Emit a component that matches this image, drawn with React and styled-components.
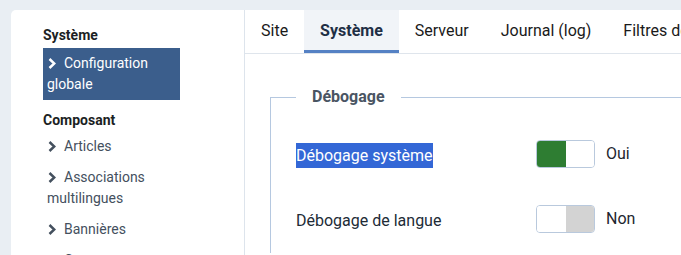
import React from "react";
import styled, { createGlobalStyle, css } from "styled-components";

const GlobalStyle = createGlobalStyle`
  html, body {
    margin: 0;
    padding: 0;
    background: #e9eef3;
    overflow: hidden;
  }
  body {
    font-family: Roboto, "Liberation Sans", Arial, sans-serif;
  }
`;

// Layout
const Page = styled.div`
  display: flex;
  width: 980px;
  padding: 10px 0 0 11px;
`;

const Sidebar = styled.nav`
  width: 233px;
  min-height: 260px;
  padding: 15px 0 0 32px;
  box-sizing: border-box;
  background: #fff;
  border-radius: 5px 0 0 0;
`;

const Heading = styled.div`
  font-size: 14px;
  font-weight: 700;
  line-height: 21px;
  color: #1c1f24;
  margin: ${(p) => (p.first ? "0 0 2px" : "10px 0 0")};
`;

const Menu = styled.ul`
  list-style: none;
  margin: 0;
  padding: 0;
  width: 137px;
`;

const Item = styled.li`
  padding: 5px 4px;
  font-size: 14px;
  line-height: 21px;
  color: #44505e;
  ${(p) =>
    p.active &&
    css`
      background: #3b5e8c;
      color: #fff;
    `}
`;

const Chevron = styled.svg`
  display: inline-block;
  width: 8px;
  height: 11px;
  margin: 0 8px 0 1px;
  vertical-align: -1px;
`;

const Main = styled.main`
  flex: 1;
  background: #fff;
  border-left: 1px solid #dde4ec;
  min-height: 260px;
`;

const TabBar = styled.div`
  display: flex;
  border-bottom: 1px solid #dfe5ec;
`;

const Tab = styled.div`
  height: 43px;
  line-height: 42px;
  padding: 0 16px;
  font-size: 16px;
  color: ${(p) => (p.active ? "#1f2f45" : "#1a1a1a")};
  font-weight: ${(p) => (p.active ? 700 : 400)};
  background: ${(p) => (p.active ? "#f1f4f8" : "transparent")};
  box-shadow: ${(p) => (p.active ? "inset 0 -3px 0 #5581c4" : "none")};
  white-space: nowrap;
`;

const Body = styled.div`
  padding: 30px 0 0 25px;
`;

const Fieldset = styled.fieldset`
  margin: 0;
  padding: 0 25px 20px 25px;
  border: 1px solid #b5c8e0;
  border-right: none;
  border-bottom: none;
  min-width: 0;
`;

const Legend = styled.legend`
  padding: 0 16px;
  font-size: 16px;
  font-weight: 700;
  line-height: 26px;
  color: #4a5563;
`;

const Row = styled.div`
  display: flex;
  align-items: flex-start;
  margin-top: ${(p) => (p.first ? "30px" : "37px")};
`;

const Label = styled.div`
  width: 240px;
  margin-top: 3px;
  font-size: 16px;
  line-height: 25px;
  color: #212b36;
`;

const Selected = styled.span`
  display: inline-block;
  background: #3367d6;
  color: #fff;
`;

const Switch = styled.div`
  display: flex;
  width: 59px;
  height: 28px;
  box-sizing: border-box;
  border: 1px solid #b9c9dd;
  border-radius: 4px;
  overflow: hidden;
`;

const Half = styled.span`
  flex: 1;
  background: ${(p) => p.fill || "#fff"};
`;

const SwitchText = styled.span`
  margin-left: 11px;
  font-size: 16px;
  line-height: 28px;
  color: #1e2630;
`;

const ChevronIcon = () => (
  <Chevron viewBox="0 0 8 11">
    <polyline
      points="1.5,1 6.3,5.5 1.5,10"
      fill="none"
      stroke="currentColor"
      strokeWidth="2.5"
    />
  </Chevron>
);

const components = ["Articles", "Associations multilingues", "Bannières", "Contacts"];
const tabs = ["Site", "Système", "Serveur", "Journal (log)", "Filtres des textes", "Permissions"];

export default function App() {
  return (
    <>
      <GlobalStyle />
      <Page>
        <Sidebar>
          <Heading first>Système</Heading>
          <Menu>
            <Item active>
              <ChevronIcon />
              Configuration globale
            </Item>
          </Menu>
          <Heading>Composant</Heading>
          <Menu>
            {components.map((c) => (
              <Item key={c}>
                <ChevronIcon />
                {c}
              </Item>
            ))}
          </Menu>
        </Sidebar>
        <Main>
          <TabBar>
            {tabs.map((t) => (
              <Tab key={t} active={t === "Système"}>
                {t}
              </Tab>
            ))}
          </TabBar>
          <Body>
            <Fieldset>
              <Legend>Débogage</Legend>
              <Row first>
                <Label>
                  <Selected>Débogage système</Selected>
                </Label>
                <Switch>
                  <Half fill="#2e7d32" />
                  <Half />
                </Switch>
                <SwitchText>Oui</SwitchText>
              </Row>
              <Row>
                <Label>Débogage de langue</Label>
                <Switch>
                  <Half />
                  <Half fill="#d3d3d3" />
                </Switch>
                <SwitchText>Non</SwitchText>
              </Row>
            </Fieldset>
          </Body>
        </Main>
      </Page>
    </>
  );
}
